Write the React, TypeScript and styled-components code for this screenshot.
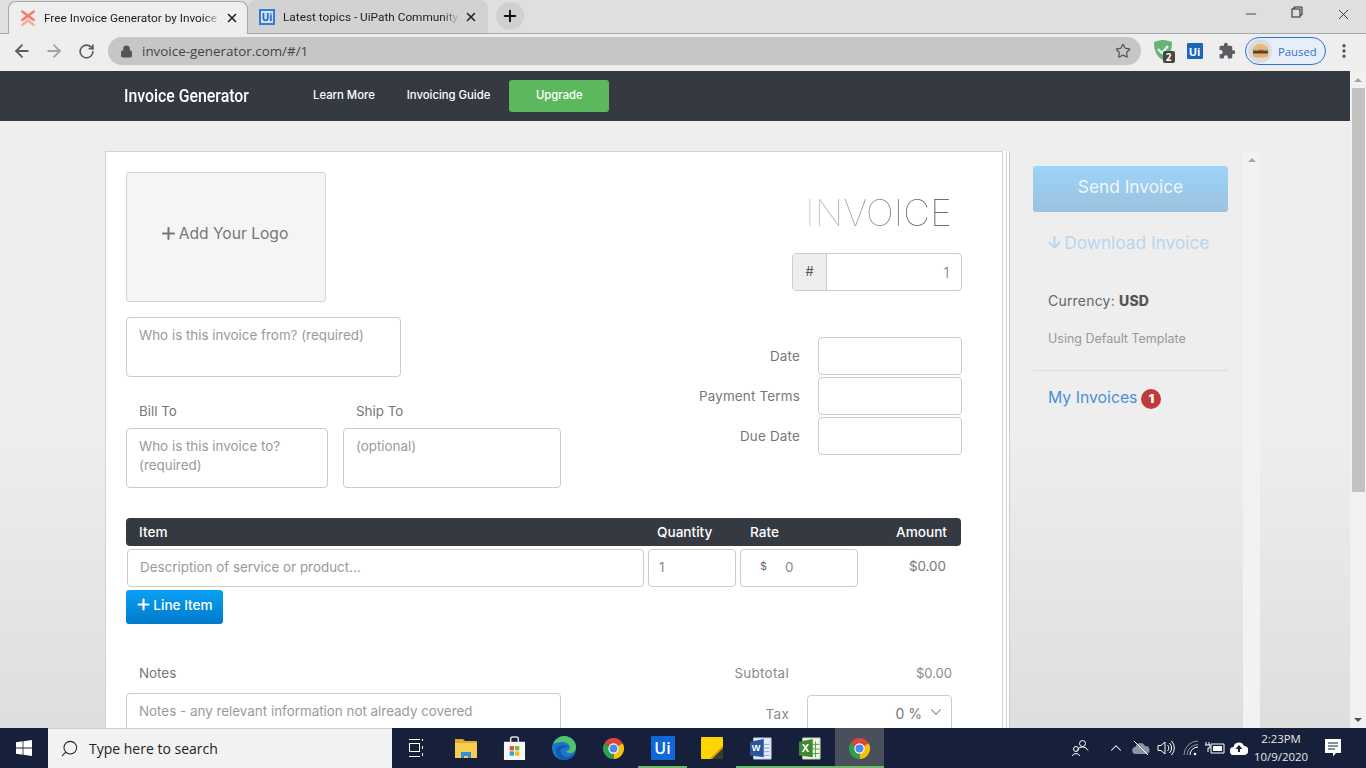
import React from "react";
import styled, { createGlobalStyle } from "styled-components";
import { ArrowLeft, ArrowRight, RotateCw, Lock, Star, Plus, X, Minus, MoreVertical, Search, ChevronDown, ChevronUp } from "lucide-react";

const Global = createGlobalStyle`
  * { box-sizing: border-box; }
  html, body { margin: 0; padding: 0; overflow: hidden; }
  body { font-family: Inter, "Liberation Sans", sans-serif; }
`;

const Screen = styled.div`
  width: 1366px; height: 768px; display: flex; flex-direction: column; overflow: hidden; background: #eee;
`;
const TabStrip = styled.div`
  height: 34px; flex: none; display: flex; align-items: flex-end; background: #dfdfdf;
  padding-left: 8px; border-bottom: 1px solid #a9a9a9;
`;
const Tab = styled.div<{ $active?: boolean }>`
  width: 240px; height: 33px; flex: none;
  display: flex; align-items: center; padding: 0 ${(p) => (p.$active ? 8 : 10)}px 0 11px; gap: 8px;
  background: ${(p) => (p.$active ? "#eeeeee" : "#d2d2d2")};
  border-radius: 8px 8px 0 0;
  border: ${(p) => (p.$active ? "1px solid #a9a9a9" : "none")};
  border-bottom: none;
  margin-bottom: ${(p) => (p.$active ? "-1px" : "0")};
  position: relative; z-index: ${(p) => (p.$active ? 1 : 0)};
`;
const TabTitle = styled.span`
  flex: 1; min-width: 0; white-space: nowrap; overflow: hidden; font: 11.8px Roboto, sans-serif; color: #222; margin-right: -4px;
  -webkit-mask-image: linear-gradient(90deg, #000 90%, transparent 100%);
  mask-image: linear-gradient(90deg, #000 90%, transparent 100%);
`;
const NewTab = styled.div`
  width: 28px; height: 28px; border-radius: 50%; background: #d0d0d0; margin: 0 0 3px 8px;
  display: flex; align-items: center; justify-content: center; flex: none; color: #111;
`;
const WinControls = styled.div`
  margin-left: auto; display: flex; align-self: stretch; color: #222;
`;
const WinButton = styled.div`
  width: 46px; display: flex; align-items: flex-start; justify-content: center; padding-top: 6px;
`;
const Toolbar = styled.div`
  height: 37px; flex: none; display: flex; align-items: center; background: #eeeeee; padding: 0 0 3px 6px;
`;
const NavIcon = styled.div<{ $dim?: boolean }>`
  width: 32px; display: flex; justify-content: center; color: ${(p) => (p.$dim ? "#a3a3a3" : "#5a5d62")};
`;
const UrlBar = styled.div`
  width: 1033px; height: 28px; margin-left: 6px; border-radius: 14px; background: #c6c6c6;
  display: flex; align-items: center; padding: 0 10px 0 12px; gap: 9px;
  font: 13.4px "Open Sans", sans-serif; color: #444; flex: none;
`;
const UrlText = styled.span` flex: 1; `;
const ExtSlot = styled.div<{ $w: number }>`
  width: ${(p) => p.$w}px; flex: none; display: flex; justify-content: center; align-items: center;
`;
const ShieldSlot = styled(ExtSlot)` margin-left: 4px; `;
const PuzzleSlot = styled(ExtSlot)` padding-left: 4px; `;
const ShieldWrap = styled.div` position: relative; width: 24px; height: 24px; `;
const ShieldBadge = styled.span`
  position: absolute; left: 10px; top: 12px; width: 12px; height: 12px; background: #444; color: #fff;
  font: bold 10px/12px "Open Sans", sans-serif; text-align: center; border-radius: 2px;
`;
const UiMark = styled.div<{ $size: number }>`
  width: ${(p) => p.$size}px; height: ${(p) => p.$size}px; background: #1b66b8; color: #fff; border-radius: 1px;
  display: flex; align-items: center; justify-content: center;
  font: bold ${(p) => Math.round(p.$size * 0.68)}px "Open Sans", sans-serif;
`;
const TaskUi = styled(UiMark)` background: #0f67d8; font-weight: 600; `;
const FavUi = styled.div`
  width: 16px; height: 16px; flex: none; border: 2px solid #2f7fd6; background: #cfe0f5; color: #1d5fb0;
  font: bold 10px/12px "Open Sans", sans-serif; text-align: center;
`;
const Profile = styled.div`
  width: 81px; height: 28px; border: 1px solid #2a73d9; border-radius: 14px; background: #e8eef8; flex: none;
  display: flex; align-items: center; padding-left: 2px; gap: 6px; color: #3a6fd0; font: 11.3px "Open Sans", sans-serif;
`;
const Avatar = styled.div`
  width: 24px; height: 24px; border-radius: 50%; background: #dcdcdc; display: flex; align-items: center; justify-content: center; flex: none;
`;

const Viewport = styled.div` flex: 1; min-height: 0; display: flex; `;
const PageArea = styled.div`
  flex: 1; min-width: 0; display: flex; flex-direction: column; overflow: hidden;
  background: linear-gradient(#eeeeee 0%, #eeeeee 55%, #dedede 100%);
`;
const Scroll = styled.div<{ $w: number }>`
  width: ${(p) => p.$w}px; flex: none; background: #f1f1f1; display: flex; flex-direction: column; align-items: center;
`;
const ArrowBox = styled.div` height: 17px; flex: none; display: flex; align-items: center; justify-content: center; `;
const Tri = styled.div<{ $down?: boolean }>`
  width: 0; height: 0; border-left: 4px solid transparent; border-right: 4px solid transparent;
  ${(p) => (p.$down ? "border-top: 4px solid #505050;" : "border-bottom: 4px solid #a3a3a3;")}
`;
const Thumb = styled.div` width: 13px; height: 404px; background: #c1c1c1; flex: none; `;
const Spacer = styled.div` flex: 1; `;

const TopNav = styled.nav`
  height: 50px; flex: none; background: #353a42; display: flex; align-items: center; padding-left: 124px; color: #fff;
`;
const Brand = styled.div`
  width: 189px; font: 500 18px Roboto, sans-serif; white-space: nowrap; margin-top: -2px;
`;
const BrandText = styled.span` display: inline-block; transform: scaleX(0.88); transform-origin: left; `;
const NavLink = styled.a`
  font: 500 11.3px Inter, sans-serif; color: #fff; margin-right: 32px; white-space: nowrap; margin-top: -2px;
`;
const Upgrade = styled.div`
  width: 100px; height: 32px; background: #5cb85c; border-radius: 3px; display: flex; align-items: center; justify-content: center;
  font: 500 11.3px Inter, sans-serif; color: #fff; margin-left: -13px; padding-bottom: 2px;
`;

const Main = styled.div` flex: 1; min-height: 0; display: flex; padding: 30px 0 0 105px; `;
const Card = styled.div`
  width: 898px; height: 700px; flex: none; background: #fff; padding: 20px 40px 0 20px; border: 1px solid #d2d2d2;
  box-shadow: 3px 0 0 0 #fff, 4px 0 0 0 #d8d8d8, 6px 0 0 0 #fff, 7px 0 0 0 #ccc;
`;
const TopRow = styled.div` display: flex; justify-content: space-between; height: 346px; `;
const LeftCol = styled.div` width: 435px; display: flex; flex-direction: column; `;
const RightCol = styled.div` width: 300px; display: flex; flex-direction: column; align-items: flex-end; `;
const Logo = styled.div`
  width: 200px; height: 130px; background: #f5f5f5; border: 1px solid #d4d4d4; border-radius: 3px; margin-bottom: 15px;
  display: flex; align-items: center; justify-content: center; gap: 1px; color: #777; font-size: 15.6px; padding: 0 5px 8px 0;
`;
const TextBox = styled.textarea<{ $w: number }>`
  width: ${(p) => p.$w}px; height: 60px; display: block; border: 1px solid #ccc; border-radius: 4px; padding: 8px 12px;
  font: 13.4px/19px Inter, sans-serif; color: #555; resize: none; outline: none; background: #fff; overflow: hidden;
  &::placeholder { color: #9a9a9a; opacity: 1; }
`;
const BillRow = styled.div` display: flex; gap: 15px; margin-top: 26px; `;
const BillCol = styled.div` display: flex; flex-direction: column; `;
const Label = styled.label`
  font-size: 13.4px; line-height: 17px; color: #777; padding-left: 13px; margin-bottom: 8px;
`;
const Title = styled.div`
  font: 100 37px/40px Inter, sans-serif; margin: 21px 10px 20px 0; letter-spacing: 0.2px;
  background: linear-gradient(90deg, #c4c4c4 0%, #8a8a8a 45%, #333 100%);
  -webkit-background-clip: text; background-clip: text; color: transparent;
`;
const NumberGroup = styled.div`
  width: 170px; height: 38px; display: flex; border: 1px solid #ccc; border-radius: 4px; overflow: hidden; margin-bottom: 46px;
`;
const NumberAddon = styled.div`
  width: 34px; background: #eee; border-right: 1px solid #ccc; display: flex; align-items: center; justify-content: center; font-size: 13px; color: #555; padding-bottom: 3px;
`;
const NumberValue = styled.div`
  flex: 1; text-align: right; padding: 10px 12px 0 0; font-size: 14px; font-weight: 300; color: #777;
`;
const MetaRow = styled.div` display: flex; align-items: center; margin-bottom: 2px; `;
const MetaLabel = styled.span` font-size: 13.4px; letter-spacing: 0.2px; color: #777; margin-right: 18px; `;
const MetaInput = styled.div` width: 144px; height: 38px; border: 1px solid #ccc; border-radius: 4px; `;

const ItemHeader = styled.div`
  width: 835px; height: 28px; background: #353a42; border-radius: 4px; color: #fff; font-size: 13.6px; font-weight: 450;
  display: grid; grid-template-columns: 518px 93px 1fr auto; align-items: center; padding: 0 14px 0 13px;
`;
const ItemRow = styled.div` display: flex; gap: 4px; margin: 3px 0 3px 1px; height: 38px; `;
const Cell = styled.div<{ $w: number; $pad?: number }>`
  width: ${(p) => p.$w}px; height: 38px; border: 1px solid #ccc; border-radius: 4px; flex: none; display: flex; align-items: center;
  padding: 0 ${(p) => p.$pad ?? 12}px 2px; font-size: 13.4px; font-weight: 400; color: #888;
`;
const Placeholder = styled.span` color: #9a9a9a; `;
const Dollar = styled.span` font-size: 11px; color: #666; margin: -2px 18px 0 7px; `;
const Amount = styled.div` flex: 1; text-align: right; padding: 9px 16px 0 0; font-size: 13.4px; color: #777; `;
const LineItem = styled.div`
  width: 97px; height: 34px; border-radius: 3px; background: linear-gradient(#0aa1f2, #0079cc); color: #fff;
  display: flex; align-items: center; justify-content: center; gap: 1px; font-size: 13.6px; font-weight: 450; padding: 0 1px 5px 0;
`;
const Bottom = styled.div` display: flex; justify-content: space-between; margin-top: 41px; `;
const BottomLeft = styled.div` width: 435px; display: flex; flex-direction: column; `;
const BottomRight = styled.div` width: 320px; margin: -2px 10px 0 0; display: flex; flex-direction: column; `;
const NotesBox = styled.div`
  width: 435px; height: 60px; margin-top: 3px; border: 1px solid #ccc; border-radius: 4px; padding: 8px 12px; font-size: 13.4px; line-height: 19px; color: #9a9a9a;
`;
const TotalRow = styled.div` display: flex; align-items: center; height: 19px; margin-bottom: 13px; font-size: 13.4px; color: #8a8a8a; `;
const TotalLabel = styled.span` width: 175px; text-align: right; padding-right: 18px; flex: none; letter-spacing: 0.3px; `;
const TotalValue = styled.span` flex: 1; text-align: right; font-size: 13px; `;
const TaxRow = styled.div` display: flex; align-items: flex-start; font-size: 13.4px; color: #8a8a8a; `;
const TaxLabel = styled(TotalLabel)` padding-top: 11px; `;
const TaxBox = styled.div`
  width: 145px; height: 60px; border: 1px solid #ccc; border-radius: 4px; display: flex; justify-content: flex-end; gap: 5px;
  padding: 9px 6px 0 0; color: #777; font-size: 14px;
`;
const TaxChevron = styled(ChevronDown)` margin-top: -2px; `;

const Side = styled.aside` width: 195px; margin-left: 30px; flex: none; display: flex; flex-direction: column; padding-top: 15px; `;
const SendBtn = styled.div`
  height: 46px; border-radius: 3px; background: linear-gradient(#9cd4f8, #9cc2df); color: #eef7fd; font-size: 17.3px; font-weight: 400;
  display: flex; align-items: center; justify-content: center; padding-bottom: 6px;
`;
const Download = styled.div`
  margin-top: 18px; height: 24px; color: #b9d6ef; font-size: 17.3px; display: flex; align-items: center; justify-content: center; gap: 2px; padding-right: 5px;
`;
const DownArrow = styled.span` font-weight: 700; `;
const Currency = styled.div` margin: 37px 0 0 15px; font-size: 14px; letter-spacing: 0.2px; line-height: 20px; color: #666; `;
const CurrencyCode = styled.b` font-weight: 800; color: #555; letter-spacing: 0.2px; `;
const TemplateNote = styled.div` margin: 19px 0 0 15px; font-size: 12.5px; line-height: 18px; color: #999; `;
const Rule = styled.hr` border: 0; border-top: 1px solid #ddd; margin: 22px 0 16px; width: 100%; `;
const MyInvoices = styled.div`
  margin-left: 15px; display: flex; align-items: center; gap: 4px; font-size: 15.8px; color: #4a90d9; line-height: 22px;
`;
const Badge = styled.span`
  width: 20px; height: 20px; border-radius: 50%; background: #bf3b3b; color: #fff; font-size: 12px; font-weight: 900; margin-top: 2px;
  display: flex; align-items: center; justify-content: center;
`;
const InnerScroll = styled(Scroll)` margin-left: 15px; background: #f2f2f2; height: 657px; `;

const Taskbar = styled.footer`
  height: 40px; flex: none; background: #16203a; display: flex; align-items: stretch; color: #fff;
`;
const StartBtn = styled.div` width: 48px; display: flex; align-items: center; justify-content: center; flex: none; `;
const SearchBox = styled.div`
  width: 344px; flex: none; background: #f2f2f2; display: flex; align-items: center; gap: 10px; padding-left: 12px;
  color: #222; font: 14px "Open Sans", sans-serif; border-top: 1px solid #ccc;
`;
const MirrorSearch = styled(Search)` transform: scaleX(-1); `;
const Slot = styled.div<{ $active?: boolean; $open?: boolean }>`
  width: 49.2px; flex: none; display: flex; align-items: center; justify-content: center; position: relative;
  background: ${(p) => (p.$active ? "#4a4f5c" : "transparent")};
  border-bottom: 2px solid ${(p) => (p.$open ? "#6bb86b" : "transparent")};
  padding-top: 2px;
`;
const Tray = styled.div` margin-left: auto; display: flex; align-items: center; `;
const TrayItem = styled.div<{ $w: number }>` width: ${(p) => p.$w}px; display: flex; justify-content: center; `;
const PeopleItem = styled(TrayItem)` margin-right: 8px; `;
const Clock = styled.div`
  width: 60px; text-align: center; font: 11.4px/18px "Open Sans", sans-serif; color: #e8e8e8; white-space: nowrap;
`;
const Notify = styled.div` width: 55px; display: flex; justify-content: center; padding-right: 11px; `;

const ChromeLogo = ({ s = 23 }: { s?: number }) => (
  <svg width={s} height={s} viewBox="0 0 24 24">
    <path d="M12 12L2.47 6.5A11 11 0 0 1 21.53 6.5Z" fill="#db4437" />
    <path d="M12 12L21.53 6.5A11 11 0 0 1 12 23Z" fill="#f4c20d" />
    <path d="M12 12L12 23A11 11 0 0 1 2.47 6.5Z" fill="#2f9e4f" />
    <circle cx="12" cy="12" r="5.4" fill="#fff" />
    <circle cx="12" cy="12" r="4.2" fill="#4a8bf0" />
  </svg>
);
const Favicon = () => (
  <svg width="16" height="16" viewBox="0 0 16 16" style={{ flex: "none" }} fill="none" strokeWidth="2.6">
    <path d="M1.500 1l13 9.500M14.500 1L1.500 10.500" stroke="#f47d68" />
    <path d="M1.500 15.500L8 10.500l6.500 5" stroke="#f9ab9c" />
  </svg>
);
const Burger = () => (
  <svg width="19" height="16" viewBox="0 0 20 16">
    <path d="M2 6.500c0-4 4-6 8-6s8 2 8 6z" fill="#eab878" />
    <rect x="1.500" y="6.500" width="17" height="1.500" fill="#83a94a" />
    <rect x="8" y="6.500" width="5" height="2" fill="#d8503a" />
    <rect x="2" y="8" width="16" height="3" rx="1" fill="#5e3d2a" />
    <path d="M2 11h16v1.500c0 1.500-2 2.500-8 2.500s-8-1-8-2.500z" fill="#e3ae6c" />
  </svg>
);
const Shield = () => (
  <svg width="20" height="22" viewBox="0 0 20 22">
    <path d="M10 1c4 0 6 1 9 2 0 8-2 14-9 18C3 17 1 11 1 3c3-1 5-2 9-2z" fill="#67b279" />
    <path d="M5 10l4 4 6-7" stroke="#e6f5e9" strokeWidth="2.4" fill="none" />
  </svg>
);
const Puzzle = () => (
  <svg width="18" height="18" viewBox="0 0 24 24" fill="#5a5d62">
    <path d="M20.500 11H19V7a2 2 0 0 0-2-2h-4V3.500a2.500 2.500 0 0 0-5 0V5H4a2 2 0 0 0-2 2v3.800h1.500a2.700 2.700 0 0 1 0 5.400H2V20a2 2 0 0 0 2 2h3.800v-1.500a2.700 2.700 0 0 1 5.400 0V22H17a2 2 0 0 0 2-2v-4h1.500a2.500 2.500 0 0 0 0-5z" />
  </svg>
);
const Restore = () => (
  <svg width="12" height="12" viewBox="0 0 12 12" fill="none" stroke="#222">
    <rect x="1" y="3" width="8" height="8" />
    <path d="M3 3V1h8v8H9" />
  </svg>
);
const WinLogo = () => (
  <svg width="16" height="16" viewBox="0 0 16 16" fill="#fff">
    <path d="M0 2.200l6.600-.9v6.300H0zM7.400 1.200L16 0v7.600H7.400zM0 8.400h6.600v6.300L0 13.800zM7.400 8.400H16V16l-8.600-1.200z" />
  </svg>
);
const TaskView = () => (
  <svg width="16" height="20" viewBox="0 0 16 20" fill="none" stroke="#fff">
    <path d="M0 1.500h11M0 18.500h11M13.500 1v2M13.500 8v3M13.500 15v3" />
    <rect x=".5" y="5.500" width="10" height="8" />
  </svg>
);
const Folder = () => (
  <svg width="22" height="19" viewBox="0 0 22 19">
    <path d="M0 0h8l2 2h12v3H0z" fill="#e4a92c" />
    <path d="M0 4h22v15H0z" fill="#f7cd4f" />
    <path d="M6 13h10v6h-3v-2H9v2H6z" fill="#2f8fd8" />
  </svg>
);
const Store = () => (
  <svg width="23" height="24" viewBox="0 0 24 25">
    <path d="M8 7V3a2 2 0 0 1 2-2h4a2 2 0 0 1 2 2v4" stroke="#ddd" strokeWidth="1.600" fill="none" />
    <rect x="1" y="6" width="22" height="19" fill="#f7f7f7" />
    <rect x="7" y="10.500" width="4.500" height="4.500" fill="#e8502a" />
    <rect x="12.500" y="10.500" width="4.500" height="4.500" fill="#7db93a" />
    <rect x="7" y="16" width="4.500" height="4.500" fill="#2a9fe0" />
    <rect x="12.500" y="16" width="4.500" height="4.500" fill="#f7b91c" />
  </svg>
);
const Edge = () => (
  <svg width="24" height="24" viewBox="0 0 24 24">
    <circle cx="12" cy="12" r="12" fill="#1b77c9" />
    <path d="M1 9C3 3 8 0 12 0c7 0 12 5 12 11 0 4-3 6-6 6-2 0-4-1-4-2 3 0 4-2 4-4-1-3-4-5-8-5-4 0-8 1-9 3z" fill="#52c36c" />
    <path d="M12 9c3 0 4 2 3 3-2-1-5 0-6 2s1 6 5 7c4 0 8-2 10-6-1 5-6 9-12 9 -6-1-9-6-8-11 1-3 4-4 8-4z" fill="#0f5cab" />
  </svg>
);
const Sticky = () => (
  <svg width="22" height="22" viewBox="0 0 22 22">
    <path d="M0 1a1 1 0 0 1 1-1h20a1 1 0 0 1 1 1v12l-9 9H1a1 1 0 0 1-1-1z" fill="#ffd400" />
    <path d="M22 9v12a1 1 0 0 1-1 1H9z" fill="#3d3a34" />
    <path d="M22 9v2L11 22H9z" fill="#e4a70a" />
  </svg>
);
const Word = () => (
  <svg width="22" height="23" viewBox="0 0 24 25">
    <path d="M4 1h19v23H4z" fill="#e8eef7" stroke="#b9c8df" />
    <path d="M0 5l15-3v20L0 20z" fill="#2a5699" />
    <path d="M15 8h6M15 12h6M15 16h6M15 20h6" stroke="#7b9ccb" />
    <text x="2" y="15" fontSize="10" fontWeight="700" fill="#fff" fontFamily="Liberation Sans">W</text>
  </svg>
);
const Excel = () => (
  <svg width="22" height="23" viewBox="0 0 24 25">
    <path d="M4 1h19v23H4z" fill="#eef5e6" stroke="#bcd1a7" />
    <path d="M0 5l15-3v20L0 20z" fill="#3f8a30" />
    <path d="M15 8h7M15 13h7M15 18h7M18 5v17" stroke="#4c9a3c" />
    <text x="3" y="16" fontSize="12" fontWeight="700" fill="#fff" fontFamily="Liberation Sans">X</text>
  </svg>
);
const People = () => (
  <svg width="18" height="18" viewBox="0 0 18 18" fill="none" stroke="#fff">
    <circle cx="11.500" cy="4.500" r="3" />
    <path d="M6 11.500a6 6 0 0 1 11 0" />
    <circle cx="5" cy="10" r="2.500" />
    <path d="M1 17a4.500 4.500 0 0 1 8 0" />
  </svg>
);
const CloudOff = () => (
  <svg width="18" height="16" viewBox="0 0 18 16">
    <path d="M4 14a3.500 3.500 0 0 1-.5-7A5 5 0 0 1 13 6a4 4 0 0 1 1 8z" fill="#8d94a3" />
    <path d="M2 1l14 14" stroke="#fff" />
  </svg>
);
const Volume = () => (
  <svg width="18" height="16" viewBox="0 0 18 16" fill="none" stroke="#fff">
    <path d="M1 5.500h3L8 2v12l-4-3.500H1z" />
    <path d="M10.500 5a4 4 0 0 1 0 6M12.500 3a7 7 0 0 1 0 10M14.500 1a10 10 0 0 1 0 14" />
  </svg>
);
const Wifi = () => (
  <svg width="16" height="16" viewBox="0 0 16 16" fill="none" stroke="#8f95a3">
    <path d="M1 15A14 14 0 0 1 15 1M4 15A11 11 0 0 1 15 4.500" />
    <path d="M7 15a8 8 0 0 1 8-8" stroke="#fff" />
    <circle cx="12" cy="14" r="1.300" fill="#fff" stroke="none" />
  </svg>
);
const Battery = () => (
  <svg width="20" height="16" viewBox="0 0 20 16" fill="#fff">
    <path d="M6 4h13v9H6z" fill="none" stroke="#fff" />
    <path d="M8 6h9v5H8z" />
    <path d="M1 2v3M4 2v3M0 5h5v3H3v4" fill="none" stroke="#fff" />
  </svg>
);
const CloudUp = () => (
  <svg width="18" height="14" viewBox="0 0 18 14">
    <path d="M4 14a4 4 0 0 1-.5-8A5.500 5.500 0 0 1 14 5a4.500 4.500 0 0 1 0 9z" fill="#fff" />
    <path d="M9 4l3.500 4H10v3H8V8H5.500z" fill="#16203a" />
  </svg>
);
const NotifyIcon = () => (
  <svg width="16" height="18" viewBox="0 0 16 18">
    <path d="M0 0h16v14h-5l-3 3.500V14H0z" fill="#fff" />
    <path d="M3 4h10M3 7h10M3 10h7" stroke="#16203a" />
  </svg>
);

export default function App() {
  return (
    <Screen>
      <Global />
      <TabStrip>
        <Tab $active>
          <Favicon />
          <TabTitle>Free Invoice Generator by Invoice</TabTitle>
          <X size={14} strokeWidth={2.6} color="#222" />
        </Tab>
        <Tab>
          <FavUi>Ui</FavUi>
          <TabTitle>Latest topics - UiPath Community</TabTitle>
          <X size={14} strokeWidth={2.6} color="#222" />
        </Tab>
        <NewTab><Plus size={18} strokeWidth={2.6} /></NewTab>
        <WinControls>
          <WinButton><Minus size={16} strokeWidth={1.2} /></WinButton>
          <WinButton><Restore /></WinButton>
          <WinButton><X size={17} strokeWidth={1.2} /></WinButton>
        </WinControls>
      </TabStrip>
      <Toolbar>
        <NavIcon><ArrowLeft size={20} strokeWidth={2.2} /></NavIcon>
        <NavIcon $dim><ArrowRight size={20} strokeWidth={2.2} /></NavIcon>
        <NavIcon><RotateCw size={17} strokeWidth={2.4} /></NavIcon>
        <UrlBar>
          <Lock size={13} fill="#555" color="#555" />
          <UrlText>invoice-generator.com/#/1</UrlText>
          <Star size={16} color="#555" strokeWidth={1.8} />
        </UrlBar>
        <ShieldSlot $w={39}>
          <ShieldWrap><Shield /><ShieldBadge>2</ShieldBadge></ShieldWrap>
        </ShieldSlot>
        <ExtSlot $w={21}><UiMark $size={16}>Ui</UiMark></ExtSlot>
        <PuzzleSlot $w={40}><Puzzle /></PuzzleSlot>
        <Profile>
          <Avatar><Burger /></Avatar>
          Paused
        </Profile>
        <ExtSlot $w={36}><MoreVertical size={18} color="#555" strokeWidth={2.4} /></ExtSlot>
      </Toolbar>
      <Viewport>
        <PageArea>
          <TopNav>
            <Brand><BrandText>Invoice Generator</BrandText></Brand>
            <NavLink>Learn More</NavLink>
            <NavLink>Invoicing Guide</NavLink>
            <Upgrade>Upgrade</Upgrade>
          </TopNav>
          <Main>
            <Card>
              <TopRow>
                <LeftCol>
                  <Logo><Plus size={19} strokeWidth={2.6} /> Add Your Logo</Logo>
                  <TextBox $w={275} placeholder="Who is this invoice from? (required)" />
                  <BillRow>
                    <BillCol>
                      <Label>Bill To</Label>
                      <TextBox $w={202} placeholder="Who is this invoice to? (required)" />
                    </BillCol>
                    <BillCol>
                      <Label>Ship To</Label>
                      <TextBox $w={218} placeholder="(optional)" />
                    </BillCol>
                  </BillRow>
                </LeftCol>
                <RightCol>
                  <Title>INVOICE</Title>
                  <NumberGroup>
                    <NumberAddon>#</NumberAddon>
                    <NumberValue>1</NumberValue>
                  </NumberGroup>
                  <MetaRow><MetaLabel>Date</MetaLabel><MetaInput /></MetaRow>
                  <MetaRow><MetaLabel>Payment Terms</MetaLabel><MetaInput /></MetaRow>
                  <MetaRow><MetaLabel>Due Date</MetaLabel><MetaInput /></MetaRow>
                </RightCol>
              </TopRow>
              <ItemHeader>
                <span>Item</span><span>Quantity</span><span>Rate</span><span>Amount</span>
              </ItemHeader>
              <ItemRow>
                <Cell $w={517}><Placeholder>Description of service or product...</Placeholder></Cell>
                <Cell $w={88} $pad={10}>1</Cell>
                <Cell $w={118}><Dollar>$</Dollar>0</Cell>
                <Amount>$0.00</Amount>
              </ItemRow>
              <LineItem><Plus size={17} strokeWidth={3} /> Line Item</LineItem>
              <Bottom>
                <BottomLeft>
                  <Label>Notes</Label>
                  <NotesBox>Notes - any relevant information not already covered</NotesBox>
                </BottomLeft>
                <BottomRight>
                  <TotalRow><TotalLabel>Subtotal</TotalLabel><TotalValue>$0.00</TotalValue></TotalRow>
                  <TaxRow>
                    <TaxLabel>Tax</TaxLabel>
                    <TaxBox>0 % <TaxChevron size={18} strokeWidth={1.4} /></TaxBox>
                  </TaxRow>
                </BottomRight>
              </Bottom>
            </Card>
            <Side>
              <SendBtn>Send Invoice</SendBtn>
              <Download><DownArrow>↓</DownArrow>Download Invoice</Download>
              <Currency>Currency: <CurrencyCode>USD</CurrencyCode></Currency>
              <TemplateNote>Using Default Template</TemplateNote>
              <Rule />
              <MyInvoices>My Invoices <Badge>1</Badge></MyInvoices>
            </Side>
            <InnerScroll $w={17}>
              <ArrowBox><Tri /></ArrowBox>
            </InnerScroll>
          </Main>
        </PageArea>
        <Scroll $w={16}>
          <ArrowBox><Tri /></ArrowBox>
          <Thumb />
          <Spacer />
          <ArrowBox><Tri $down /></ArrowBox>
        </Scroll>
      </Viewport>
      <Taskbar>
        <StartBtn><WinLogo /></StartBtn>
        <SearchBox><MirrorSearch size={19} strokeWidth={1.3} />Type here to search</SearchBox>
        <Slot><TaskView /></Slot>
        <Slot><Folder /></Slot>
        <Slot><Store /></Slot>
        <Slot><Edge /></Slot>
        <Slot><ChromeLogo /></Slot>
        <Slot $open><TaskUi $size={24}>Ui</TaskUi></Slot>
        <Slot><Sticky /></Slot>
        <Slot $open><Word /></Slot>
        <Slot $open><Excel /></Slot>
        <Slot $open $active><ChromeLogo /></Slot>
        <Tray>
          <PeopleItem $w={30}><People /></PeopleItem>
          <TrayItem $w={26}><ChevronUp size={18} strokeWidth={1.4} /></TrayItem>
          <TrayItem $w={24}><CloudOff /></TrayItem>
          <TrayItem $w={25}><Volume /></TrayItem>
          <TrayItem $w={25}><Wifi /></TrayItem>
          <TrayItem $w={23}><Battery /></TrayItem>
          <TrayItem $w={25}><CloudUp /></TrayItem>
          <Clock>2:23PM<br />10/9/2020</Clock>
          <Notify><NotifyIcon /></Notify>
        </Tray>
      </Taskbar>
    </Screen>
  );
}
